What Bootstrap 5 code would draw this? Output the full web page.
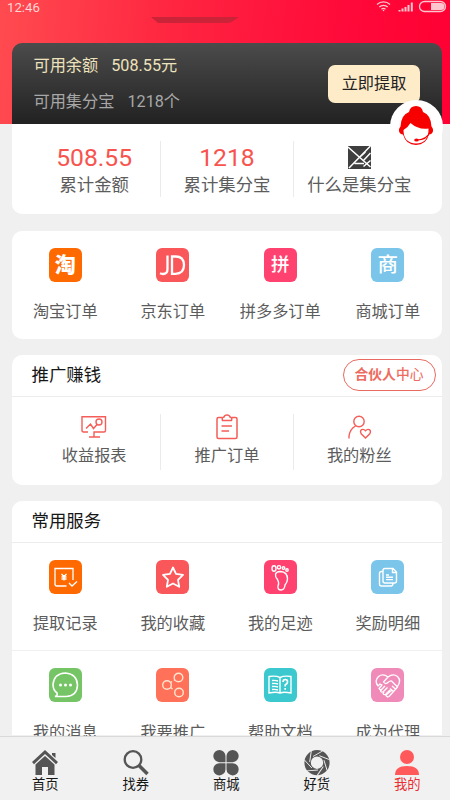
<!DOCTYPE html>
<html lang="zh-CN">
<head>
<meta charset="utf-8">
<meta name="viewport" content="width=device-width, initial-scale=1">
<title>我的</title>
<link href="https://cdn.jsdelivr.net/npm/bootstrap@5.3.0/dist/css/bootstrap.min.css" rel="stylesheet">
<style>
body{background:#f0f0f1;font-family:Roboto,"Noto Sans CJK SC",sans-serif;height:800px;overflow:hidden;color:#5c5c5c}
svg{display:block;flex:none}
.screen{width:450px;height:800px}
.hero{height:124px;background:linear-gradient(95deg,#ff4b50 0%,#ff2540 38%,#ff0a3a 75%,#ff0033 100%)}
.status{height:43px;color:#ffd5d5;font-size:13.2px;line-height:15px;padding:0 2px 0 7px}
.notch{left:151px;top:17px;width:88px;height:6px;background:#cb2338;clip-path:polygon(0 0,100% 0,92% 80%,88% 100%,8% 100%)}
.panel{width:430px;margin-left:11.5px;background:#fff;border-radius:10px}
.balance{height:81px;background:linear-gradient(#4b4b4b,#222);border-radius:10px 10px 0 0;padding:5px 21.5px 0 22px}
.line-a,.line-b{font-size:16.2px;line-height:35.5px;gap:13px}
.line-a{color:#eee2bd}.line-b{color:#a7a7a7}
.withdraw{width:92px;height:38px;margin-top:17px;border-radius:7px;background:#feebc8;color:#222;font-size:16.2px;line-height:38px;padding:0;border:0}
.service{left:390px;top:100px;width:53px;height:53px;background:#fff}
.totals{height:90px;border-radius:0 0 10px 10px;padding:17px 16.5px}
.third{width:33.333%;height:56px}
.third+.third{border-left:1px solid #ebebeb}
.amount{font-size:24.7px;line-height:33px;color:#f8544e;height:32px}
.total-label{font-size:17.4px;line-height:24px}
.tile{width:25%;height:108px;padding-top:17px}
.tile-label{font-size:16.2px;line-height:24px;margin-top:18px}
.ico{width:33px;height:34px;border-radius:6px}
.orange{background:#ff6a00}.coral{background:#fa575b}.rose{background:#ff426f}.sky{background:#7ac5e9}
.green{background:#75c465}.salmon{background:#ff7259}.teal{background:#3bc9cf}.pink{background:#f08bb9}
.glyph{color:#fff;font-weight:700;font-size:20px;line-height:35px}
.glyph-tao{font-weight:900;font-size:21px}
.glyph-pin{font-weight:500;font-size:18.5px}
.glyph-shang{font-weight:500;font-size:20.5px}
.heading{height:41.5px;border-bottom:1px solid #ececec;color:#161616;font-size:17.4px;line-height:40px;padding:0 6px 0 20px}
.partner{width:93px;height:32px;margin-top:4px;border:1.4px solid #e96a60;border-radius:16px;color:#ee6b60;font-size:13.8px;line-height:29px}
.partner span{font-weight:500}
.promo{height:88.5px;padding:17px 16.5px}
.promo-label{font-size:16.2px;line-height:24px;margin-top:4px}
.services{height:234px;border-radius:10px 10px 0 0}
.services .tile{height:107.5px;padding-top:17px}
.services .tile-label{margin-top:18.5px}
.tabs{height:64px;background:#f1f1f1;border-top:1px solid #d9d9d9;position:relative}
.tab-item{width:90.5px;flex:none;padding-top:13px;color:#161616;font-size:13.3px;line-height:18px}
.tab-item.on{color:#e92f34}
.row-line{border-top:1px solid #f0f0f0}
</style>
</head>
<body>
<div class="screen position-relative overflow-hidden d-flex flex-column">
  <header class="hero">
    <div class="status d-flex justify-content-between">
      <span>12:46</span>
      <svg width="72" height="14" viewBox="0 0 72 14" fill="none" stroke="#ffc5ce" stroke-width="1.3">
        <path d="M1 4.500a9.500 9.500 0 0 1 13 0M3.300 7a6 6 0 0 1 8.400 0M5.500 9.200a3 3 0 0 1 4 0"/><circle cx="7.500" cy="10.500" r=".8" fill="#ffc5ce" stroke="none"/>
        <path stroke-width="2" d="M23.500 11.500V10M26.500 11.500V8.500M29.500 11.500V7M32.500 11.500V5M35.800 11.500V2.500"/>
        <rect x="43.500" y="1.500" width="26" height="10" rx="5"/><path d="M55 3h10a3.500 3.500 0 0 1 0 7H55z" fill="#ffc5ce" stroke="none"/>
      </svg>
    </div>
    <div class="notch position-absolute"></div>
    <div class="panel balance d-flex justify-content-between">
      <div>
        <div class="line-a d-flex"><span>可用余额</span><span>508.55元</span></div>
        <div class="line-b d-flex"><span>可用集分宝</span><span>1218个</span></div>
      </div>
      <button class="withdraw">立即提取</button>
    </div>
  </header>

  <div class="service position-absolute rounded-circle">
    <svg width="53" height="53" viewBox="0 0 53 53"><path fill="#f60000" d="M19 12Q20 6 26 6t7 6Q41 15 41.500 26.500q2.500 3 1 6-1 2-3.500 2Q36 45 26 45T13 34.500q-2.500 0-3.500-2-1.500-3 1-6Q11 15 19 12z"/><path fill="#fff" d="M20.500 23q8 7 18 5.500.5 14.500-12.500 15Q13.500 43 13.500 30q4-2 7-7z"/><path fill="none" stroke="#f60000" stroke-width="1.200" d="M39.500 33q-3 6.500-12 7"/><ellipse cx="26.500" cy="40" rx="2.300" ry="1.500" fill="#f60000"/></svg>
  </div>

  <section class="panel totals d-flex text-center">
    <div class="third"><div class="amount">508.55</div><div class="total-label">累计金额</div></div>
    <div class="third"><div class="amount">1218</div><div class="total-label">累计集分宝</div></div>
    <div class="third">
      <div class="amount d-flex justify-content-center align-items-center">
        <svg width="23" height="23" viewBox="0 0 23 23"><path fill="#3e3e3e" d="M0 0h23v23H0z"/><path fill="none" stroke="#fff" stroke-width="1.500" d="M0 1l22.500 20M22.500 0L1 22M6.500 17.500h9.500M12.500 10.500l5-4.500M15 15l7.500-8M15.500 20.500l7-6"/></svg>
      </div>
      <div class="total-label">什么是集分宝</div>
    </div>
  </section>

  <section class="panel d-flex mt-3 position-relative" style="top:1px">
    <div class="tile d-flex flex-column align-items-center"><div class="ico orange glyph glyph-tao text-center">淘</div><div class="tile-label">淘宝订单</div></div>
    <div class="tile d-flex flex-column align-items-center"><div class="ico coral"><svg width="33" height="34" viewBox="0 0 33 34" fill="none" stroke="#fff" stroke-width="2.300"><path d="M11.500 7.500V21q0 5-4.500 5-1.500 0-3-.7M16 8.500v17.300h3.500q8.500 0 8.500-8.700t-8.500-8.600z"/></svg></div><div class="tile-label">京东订单</div></div>
    <div class="tile d-flex flex-column align-items-center"><div class="ico rose glyph glyph-pin text-center">拼</div><div class="tile-label">拼多多订单</div></div>
    <div class="tile d-flex flex-column align-items-center"><div class="ico sky glyph glyph-shang text-center">商</div><div class="tile-label">商城订单</div></div>
  </section>

  <section class="panel mt-3 position-relative" style="top:1px">
    <div class="heading d-flex justify-content-between"><span>推广赚钱</span><div class="partner text-center"><b>合伙人</b><span>中</span>心</div></div>
    <div class="promo d-flex text-center">
      <div class="third d-flex flex-column align-items-center">
        <svg width="26" height="26" viewBox="0 0 26 26" fill="none" stroke="#f45d58" stroke-width="1.400"><path d="M7 18H2.500Q1 18 1 16.500V2.700h23.500v13.800q0 1.500-1.500 1.500H13v5M8 23h11M5 14.500l4.500-4.500 3 4.500 4-4.500"/><circle cx="18" cy="8" r="3"/></svg>
        <div class="promo-label">收益报表</div></div>
      <div class="third d-flex flex-column align-items-center">
        <svg width="26" height="26" viewBox="0 0 26 26" fill="none" stroke="#f45d58" stroke-width="1.500"><path d="M8 3.500H4.500q-1.500 0-1.500 1.500v18q0 1.500 1.500 1.500h17q1.500 0 1.500-1.500V5q0-1.500-1.500-1.500H18M8.500 6.500h9q1-3-1.500-3.500-.5-2-3-2t-3 2Q7.500 3.500 8.500 6.500zM7.500 12H18M7.500 17H15"/></svg>
        <div class="promo-label">推广订单</div></div>
      <div class="third d-flex flex-column align-items-center">
        <svg width="26" height="26" viewBox="0 0 26 26" fill="none" stroke="#f45d58" stroke-width="1.400"><circle cx="13" cy="7.500" r="5.200"/><path d="M3 24.500V22q1-7 6.500-10M19.500 24l-4.300-4.300q-1.500-2.700.5-4 2-1 3.800 1 1.800-2 3.800-1 2 1.300.5 4z"/></svg>
        <div class="promo-label">我的粉丝</div></div>
    </div>
  </section>

  <section class="panel services mt-3 position-relative" style="top:1px">
    <div class="heading">常用服务</div>
    <div class="d-flex">
      <div class="tile d-flex flex-column align-items-center"><div class="ico orange"><svg width="33" height="34" viewBox="0 0 33 34" fill="none" stroke="#fff" stroke-width="1.300"><path d="M17.500 26H8q-2 0-2-2V8.500h18V20M20 23l3 3 5-4.500"/><path stroke-width="1.400" d="M12.500 14l2.500 2.500 2.500-2.500M12.500 17h5M12.500 19h5M15 16.500V20.500"/></svg></div><div class="tile-label">提取记录</div></div>
      <div class="tile d-flex flex-column align-items-center"><div class="ico coral"><svg width="33" height="34" viewBox="0 0 33 34" fill="none" stroke="#fff" stroke-width="1.800" stroke-linejoin="round"><path d="M17 7.500l3 6.300 7 1-5 5 1.200 7-6.200-3.300-6.200 3.300 1.200-7-5-5 7-1z"/></svg></div><div class="tile-label">我的收藏</div></div>
      <div class="tile d-flex flex-column align-items-center"><div class="ico rose"><svg width="33" height="34" viewBox="0 0 33 34" fill="none" stroke="#fff" stroke-width="1.400"><path d="M11.500 14q1-2.500 5-2.500 7 .5 7 7.500 0 3-2.500 6-.5 5-4 5-3.500 0-3-4 1.500-3-.5-6.500-2.500-3-2-5.500z"/><ellipse cx="10" cy="8.500" rx="2" ry="2.700"/><circle cx="15" cy="7.300" r="1.700"/><circle cx="19.500" cy="8" r="1.300"/><circle cx="23" cy="10" r="1.200"/></svg></div><div class="tile-label">我的足迹</div></div>
      <div class="tile d-flex flex-column align-items-center"><div class="ico sky"><svg width="33" height="34" viewBox="0 0 33 34" fill="none" stroke="#fff" stroke-width="1.400"><path d="M14 8.500h8l3.500 3.500v9q0 2-2 2H14q-2 0-2-2V10.500q0-2 2-2zM21.500 8.500v4h4M12 11.500h-1.500q-2 0-2 2V24q0 2 2 2H20q2 0 2-3M15 15h3M15 17.300h7M15 19.600h7"/></svg></div><div class="tile-label">奖励明细</div></div>
    </div>
    <div class="row-line d-flex">
      <div class="tile d-flex flex-column align-items-center"><div class="ico green"><svg width="33" height="34" viewBox="0 0 33 34" fill="none" stroke="#fff" stroke-width="1.600"><path d="M8 25q-4-3-4-8.500Q5 5.500 16.500 5 28 6 28.500 17 28 28 17 28.500H6q3-1 2-3.500z"/><g fill="#fff" stroke="none"><circle cx="11.500" cy="17" r="1.500"/><circle cx="16.500" cy="17" r="1.500"/><circle cx="21.500" cy="17" r="1.500"/></g></svg></div><div class="tile-label">我的消息</div></div>
      <div class="tile d-flex flex-column align-items-center"><div class="ico salmon"><svg width="33" height="34" viewBox="0 0 33 34" fill="none" stroke="#ffe5cf" stroke-width="1.400"><circle cx="11" cy="17" r="4.300"/><circle cx="22.500" cy="9.500" r="4.300"/><circle cx="23" cy="24.500" r="4.300"/><path d="M14.500 14.500l1.500-1M18 12.500l1-.700M14.500 19.500l2 1.500"/></svg></div><div class="tile-label">我要推广</div></div>
      <div class="tile d-flex flex-column align-items-center"><div class="ico teal"><svg width="33" height="34" viewBox="0 0 33 34" fill="none" stroke="#fff" stroke-width="1.400"><path d="M16 9.500v15M16 9.500Q12 7.500 5 8.500v16.500q7-1.500 11 0 4-1.500 11 0V8.500q-7-1-11 1M8 12.500q3-.500 6 .5M8 15.500q3-.500 6 .5M8 18.500q3-.500 6 .5M8 21.500q3-.500 6 .5"/><path stroke-width="1.700" d="M19 14q0-2.500 2.300-2.500T23.500 14q0 1.500-2.300 3v1.500M21.200 20v1.800"/></svg></div><div class="tile-label">帮助文档</div></div>
      <div class="tile d-flex flex-column align-items-center"><div class="ico pink"><svg width="33" height="34" viewBox="0 0 33 34" fill="none" stroke="#fff" stroke-width="1.300" stroke-linejoin="round"><path d="M17 9q-5-4-9.500-.5Q3 13 7 18M17 9q5-4 9.500-.5Q31 13 26 19M20.500 13l6 6-8.500 9.500-1.500.500-2-2M17 9l-4.500 5q2 3 5 0l3-1.500M7 18l2-2 2 1-3 3.500q1 2 3 .5l3-3M11 21l-1.500 2q1 2 3 .5l4-4M13 24l-1 1.500q1 2 3 .5l4-4M15 27l5.500-4.500M21 18l3.500 3M19 20.500l3.500 3"/></svg></div><div class="tile-label">成为代理</div></div>
    </div>
  </section>

  <nav class="tabs d-flex mt-auto">
    <div class="tab-item d-flex flex-column align-items-center"><svg width="26" height="26" viewBox="0 0 26 26" fill="#555"><path d="M13 0l13 12-2 2.200L13 4 2 14.200 0 12zM20 3h3.500v5L20 5z"/><path d="M13 6l9.500 8.500V25H16v-8h-6v8H3.500V14.500z"/></svg><span>首页</span></div>
    <div class="tab-item d-flex flex-column align-items-center"><svg width="26" height="26" viewBox="0 0 26 26" fill="none" stroke="#555"><circle cx="10" cy="9.500" r="8.300" stroke-width="2.300"/><path stroke-width="3.500" d="M16 15.500l8.500 8.500"/></svg><span>找券</span></div>
    <div class="tab-item d-flex flex-column align-items-center"><svg width="26" height="26" viewBox="0 0 26 26" fill="#555"><path d="M12.500 12.200H6.300A6.100 6.100 0 1 1 12.500 6zM13.500 12.200h6.200A6.100 6.100 0 1 0 13.500 6zM12.500 13.200H6.300a6.100 6.100 0 1 0 6.200 6.100zM13.500 13.200h6.200a6.100 6.100 0 1 1-6.200 6.100z"/></svg><span>商城</span></div>
    <div class="tab-item d-flex flex-column align-items-center"><svg width="26" height="26" viewBox="0 0 26 26" fill="none"><circle cx="13" cy="12.700" r="9.400" stroke="#555" stroke-width="6.400"/><g stroke="#f1f1f1" stroke-width=".9"><path id="blade" d="M9 6.500L18.500 1"/><use href="#blade" transform="rotate(51.400 13 12.700)"/><use href="#blade" transform="rotate(102.900 13 12.700)"/><use href="#blade" transform="rotate(154.300 13 12.700)"/><use href="#blade" transform="rotate(205.700 13 12.700)"/><use href="#blade" transform="rotate(257.100 13 12.700)"/><use href="#blade" transform="rotate(308.600 13 12.700)"/></g></svg><span>好货</span></div>
    <div class="tab-item on d-flex flex-column align-items-center"><svg width="26" height="26" viewBox="0 0 26 26" fill="#ff595c"><circle cx="13" cy="7" r="7"/><path d="M1 25q0-9 12-9t12 9z"/></svg><span>我的</span></div>
  </nav>
</div>
<script src="https://cdn.jsdelivr.net/npm/bootstrap@5.3.0/dist/js/bootstrap.bundle.min.js"></script>
</body>
</html>
